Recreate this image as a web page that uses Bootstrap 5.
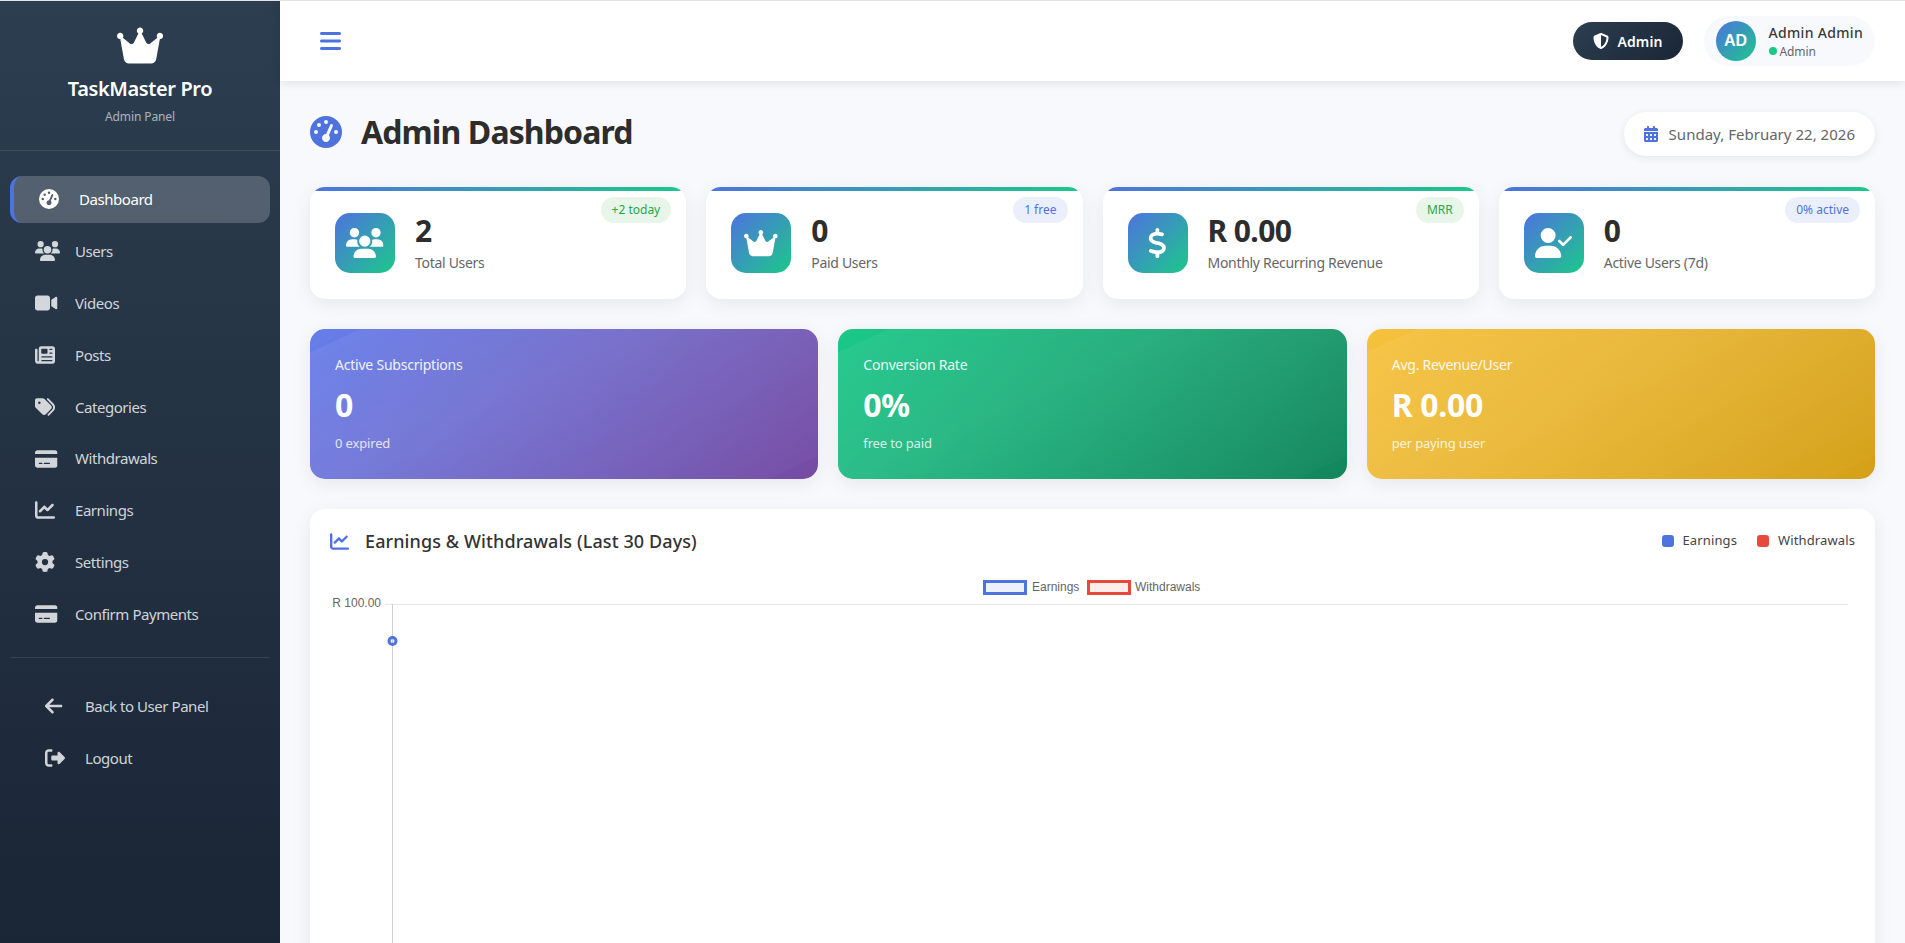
<!doctype html>
<html lang="en">
<head>
<meta charset="utf-8">
<title>Admin Dashboard</title>
<link href="https://cdn.jsdelivr.net/npm/bootstrap@5.3.0/dist/css/bootstrap.min.css" rel="stylesheet">
<style>
html,body{height:100%;overflow:hidden}
body{background:#f8f9fc;border-top:1px solid #e2e2e2;font-family:"Noto Sans",sans-serif;color:#333}
.ico{height:1em;width:auto;fill:currentColor;display:block;flex:none}
.shell{height:942px}
.side{flex:0 0 280px;width:280px;background:linear-gradient(180deg,#2c3e50,#1a2535);color:#fff}
.side-head{height:150px;border-bottom:1px solid rgba(255,255,255,.1);padding-top:24px}
.side-head .ico{font-size:41px;margin:0 auto 9px}
.brand-name{font-size:20px;font-weight:600;line-height:28px;letter-spacing:-.4px}
.brand-sub{font-size:12px;line-height:18px;margin-top:5px;opacity:.6;letter-spacing:-.1px}
.side-nav{padding:25px 10px 0}
.side-link{display:flex;align-items:center;height:46.85px;margin-bottom:5px;padding:0 0 0 25px;border-radius:12px;color:rgba(255,255,255,.8);font-size:15px;letter-spacing:-.45px}
.side-link .slot{width:25px;margin-right:15px;font-size:20px;flex:none}
.side-link.on{background:rgba(255,255,255,.2);color:#fff;border-left:4px solid #4e73df}
.side-rule{margin:14px 10px 25px;height:1px;background:rgba(255,255,255,.1)}
.side-foot{padding:0 10px}
.side-foot .side-link{padding-left:35px}
.main-pane{min-width:0}
.topbar{height:80px;background:#fff;box-shadow:0 2px 10px rgba(0,0,0,.1);padding:0 30px 0 40px;position:relative;z-index:2}
.burger{font-size:24px;color:#4e73df}
.role-btn{height:38px;padding:0 20px;border-radius:19px;background:linear-gradient(135deg,#2c3e50,#1a2636);color:#fff;font-size:14px;font-weight:600;gap:8px;letter-spacing:.1px}
.role-btn .ico{font-size:16px}
.user-pill{margin-left:21px;height:50px;padding:0 12px;border-radius:25px;background:#f8f9fc;gap:13px}
.avatar{width:40px;height:40px;border-radius:50%;background:linear-gradient(135deg,#4e73df,#1cc88a);color:#fff;font:700 16px "Liberation Sans",sans-serif}
.user-name{font-size:14px;font-weight:500;line-height:20px;letter-spacing:.32px;color:#3a3a3a}
.user-sub{font-size:12px;line-height:17px;color:#666;letter-spacing:-.1px}
.dot{width:8px;height:8px;border-radius:50%;background:#1cc88a;margin-right:3px}
.content{padding:30px}
.title-row{height:46px;margin-bottom:30px}
.page-title{font-size:32px;font-weight:700;line-height:38px;margin:0 0 4px;letter-spacing:-.9px;color:#2d2d2d}
.page-title .ico{font-size:32px;color:#4e73df;margin-right:19px}
.date-pill{height:44px;padding:0 20px;border-radius:22px;background:#fff;box-shadow:0 2px 10px rgba(0,0,0,.08);font-size:15px;color:#666;gap:11px;letter-spacing:.02px}
.date-pill .ico{font-size:16px;color:#4e73df}
.tight-row{--bs-gutter-x:20px;--bs-gutter-y:0;margin-bottom:30px}
.stat-box{height:112px;border:0;border-radius:15px;box-shadow:0 5px 20px rgba(0,0,0,.07);overflow:hidden;flex-direction:row;align-items:center;padding:0 25px;gap:20px}
.stat-box::before{content:"";position:absolute;left:0;right:0;top:0;height:4px;background:linear-gradient(90deg,#4e73df,#1cc88a)}
.stat-ico{width:60px;height:60px;border-radius:15px;background:linear-gradient(135deg,#4e73df,#1cc88a);color:#fff;font-size:30px;flex:none}
.stat-num{font-size:30px;font-weight:700;line-height:36px;letter-spacing:-.6px;color:#2d2d2d}
.stat-cap{font-size:14px;line-height:21px;margin-top:3px;color:#666;letter-spacing:-.3px}
.stat-tag{position:absolute;top:10px;right:15px;height:26px;line-height:26px;padding:0 11px;border-radius:13px;font-size:12px;letter-spacing:0}
.tag-g{background:#e8f5e9;color:#28a745}
.tag-b{background:#eaeffb;color:#4e73df}
.grad-box{height:150px;border:0;border-radius:15px;box-shadow:0 5px 20px rgba(0,0,0,.07);padding:25px;color:#fff}
.g-purple{background:linear-gradient(155deg,transparent 6%,rgba(255,255,255,.05) 6.1%,rgba(255,255,255,.08) 40%,rgba(255,255,255,.02) 94%,transparent 94.1%),linear-gradient(135deg,#667eea,#764ba2)}
.g-green{background:linear-gradient(155deg,transparent 6%,rgba(255,255,255,.05) 6.1%,rgba(255,255,255,.08) 40%,rgba(255,255,255,.02) 94%,transparent 94.1%),linear-gradient(135deg,#1cc88a,#13855c)}
.g-gold{background:linear-gradient(155deg,transparent 6%,rgba(255,255,255,.05) 6.1%,rgba(255,255,255,.08) 40%,rgba(255,255,255,.02) 94%,transparent 94.1%),linear-gradient(135deg,#f6c23e,#d4a017)}
.grad-cap{font-size:14px;line-height:21px;opacity:.9;letter-spacing:-.22px}
.grad-num{font-size:32px;font-weight:700;line-height:38px;margin-top:11px;letter-spacing:-.3px}
.grad-sub{font-size:13px;line-height:20px;margin-top:9px;opacity:.8;letter-spacing:-.15px}
.chart-box{border:0;border-radius:15px;box-shadow:0 5px 20px rgba(0,0,0,.07);padding:20px;height:600px}
.chart-head{height:24px;margin-bottom:22px}
.chart-title{font-size:18px;font-weight:500;margin:0;line-height:24px;letter-spacing:.1px;color:#333}
.chart-title .ico{font-size:19px;color:#4e73df;margin-right:16px}
.key{font-size:13px;color:#444;letter-spacing:.12px;margin-left:20px}
.key i{display:block;width:12px;height:12px;border-radius:3px;margin-right:9px}
.key-e{background:#4e73df}
.key-w{background:#e74a3b}
.chart-svg{display:block;width:1525px;height:420px}
.chart-svg text{font:12px "Liberation Sans",sans-serif;fill:#666}
</style>
</head>
<body>
<svg width="0" height="0" class="position-absolute">
<symbol id="i-crown" viewBox="0 0 576 512"><path d="M309 106c11.400-7 19-19.700 19-34c0-22.100-17.900-40-40-40s-40 17.900-40 40c0 14.400 7.600 27 19 34L209.700 220.600c-9.100 18.200-32.700 23.400-48.600 10.700L72 160c5-6.700 8-15 8-24c0-22.100-17.900-40-40-40S0 113.900 0 136s17.900 40 40 40c.2 0 .5 0 .7 0L86.400 427.400c5.500 30.400 32 52.600 63 52.600H426.600c30.900 0 57.400-22.100 63-52.600L535.300 176c.2 0 .5 0 .7 0c22.100 0 40-17.900 40-40s-17.900-40-40-40s-40 17.900-40 40c0 9 3 17.300 8 24l-89.100 71.300c-15.900 12.700-39.500 7.500-48.600-10.700L309 106z"/></symbol>
<symbol id="i-gauge" viewBox="0 0 512 512"><path d="M0 256a256 256 0 1 1 512 0A256 256 0 1 1 0 256zM288 96a32 32 0 1 0 -64 0 32 32 0 1 0 64 0zM256 416c35.300 0 64-28.700 64-64c0-17.400-6.900-33.100-18.100-44.600L366 161.700c5.300-12.100-.2-26.300-12.300-31.600s-26.300 .2-31.600 12.300L257.900 288c-.6 0-1.300 0-1.900 0c-35.300 0-64 28.700-64 64s28.700 64 64 64zM176 144a32 32 0 1 0 -64 0 32 32 0 1 0 64 0zM96 288a32 32 0 1 0 0-64 32 32 0 1 0 0 64zm352-32a32 32 0 1 0 -64 0 32 32 0 1 0 64 0z"/></symbol>
<symbol id="i-users" viewBox="0 0 640 512"><path d="M144 0a80 80 0 1 1 0 160A80 80 0 1 1 144 0zM512 0a80 80 0 1 1 0 160A80 80 0 1 1 512 0zM0 298.700C0 239.800 47.800 192 106.700 192h42.700c15.900 0 31 3.500 44.600 9.700c-1.300 7.200-1.900 14.700-1.900 22.300c0 38.200 16.800 72.500 43.300 96c-.2 0-.4 0-.7 0H21.300C9.600 320 0 310.400 0 298.700zM405.300 320c-.2 0-.4 0-.7 0c26.600-23.500 43.300-57.800 43.300-96c0-7.600-.7-15-1.900-22.300c13.600-6.300 28.700-9.700 44.600-9.700h42.700C592.200 192 640 239.800 640 298.700c0 11.800-9.600 21.300-21.300 21.300H405.300zM224 224a96 96 0 1 1 192 0 96 96 0 1 1 -192 0zM128 485.300C128 411.700 187.700 352 261.300 352H378.700C452.300 352 512 411.700 512 485.300c0 14.700-11.900 26.700-26.700 26.700H154.700c-14.700 0-26.700-11.900-26.700-26.700z"/></symbol>
<symbol id="i-video" viewBox="0 0 576 512"><path d="M0 128C0 92.700 28.700 64 64 64H320c35.300 0 64 28.700 64 64V384c0 35.300-28.700 64-64 64H64c-35.300 0-64-28.700-64-64V128zM559.100 99.800c10.400 5.600 16.900 16.400 16.900 28.200V384c0 11.800-6.500 22.600-16.900 28.200s-23 5-32.900-1.600l-96-64L416 337.100V320 192 174.900l14.200-9.500 96-64c9.800-6.500 22.400-7.200 32.900-1.600z"/></symbol>
<symbol id="i-news" viewBox="0 0 512 512"><path d="M96 96c0-35.300 28.700-64 64-64H448c35.300 0 64 28.700 64 64V416c0 35.300-28.700 64-64 64H80c-44.200 0-80-35.800-80-80V128c0-17.700 14.300-32 32-32s32 14.300 32 32V400c0 8.800 7.200 16 16 16s16-7.200 16-16V96zm64 24v80c0 13.300 10.700 24 24 24H296c13.300 0 24-10.700 24-24V120c0-13.300-10.700-24-24-24H184c-13.300 0-24 10.700-24 24zm208-8c0 8.800 7.200 16 16 16h48c8.800 0 16-7.200 16-16s-7.200-16-16-16H384c-8.800 0-16 7.200-16 16zm0 96c0 8.800 7.200 16 16 16h48c8.800 0 16-7.200 16-16s-7.200-16-16-16H384c-8.800 0-16 7.200-16 16zM160 304c0 8.800 7.200 16 16 16H432c8.800 0 16-7.200 16-16s-7.200-16-16-16H176c-8.800 0-16 7.200-16 16zm0 96c0 8.800 7.200 16 16 16H432c8.800 0 16-7.200 16-16s-7.200-16-16-16H176c-8.800 0-16 7.200-16 16z"/></symbol>
<symbol id="i-tags" viewBox="0 0 512 512"><path d="M345 39.100L472.800 168.400c52.400 53 52.400 138.200 0 191.200L360.800 472.900c-9.300 9.400-24.500 9.500-33.900 .2s-9.500-24.500-.2-33.900L438.600 325.900c33.900-34.300 33.900-89.400 0-123.700L310.900 72.900c-9.300-9.400-9.200-24.600 .2-33.900s24.600-9.200 33.900 .2zM0 229.500V80C0 53.500 21.500 32 48 32H197.500c17 0 33.300 6.700 45.300 18.700l168 168c25 25 25 65.500 0 90.500L277.300 442.700c-25 25-65.500 25-90.500 0l-168-168C6.700 262.700 0 246.500 0 229.500zM144 144a32 32 0 1 0 -64 0 32 32 0 1 0 64 0z"/></symbol>
<symbol id="i-card" viewBox="0 0 576 512"><path d="M64 32C28.700 32 0 60.700 0 96v32H576V96c0-35.300-28.700-64-64-64H64zM576 224H0V416c0 35.300 28.700 64 64 64H512c35.300 0 64-28.700 64-64V224zM112 352h64c8.800 0 16 7.200 16 16s-7.200 16-16 16H112c-8.800 0-16-7.200-16-16s7.200-16 16-16zm112 16c0-8.800 7.200-16 16-16H368c8.800 0 16 7.200 16 16s-7.200 16-16 16H240c-8.800 0-16-7.200-16-16z"/></symbol>
<symbol id="i-chart" viewBox="0 0 512 512"><path d="M64 64c0-17.700-14.300-32-32-32S0 46.300 0 64V400c0 44.200 35.800 80 80 80H480c17.700 0 32-14.300 32-32s-14.300-32-32-32H80c-8.800 0-16-7.200-16-16V64zm406.600 86.600c12.500-12.500 12.500-32.800 0-45.300s-32.800-12.500-45.300 0L320 210.700l-57.400-57.400c-12.500-12.500-32.800-12.500-45.300 0l-112 112c-12.500 12.500-12.500 32.800 0 45.300s32.800 12.500 45.300 0L240 221.300l57.400 57.400c12.500 12.500 32.800 12.500 45.300 0l128-128z"/></symbol>
<symbol id="i-gear" viewBox="0 0 512 512"><path d="M495.900 166.600c3.200 8.700 .5 18.400-6.400 24.600l-43.300 39.400c1.100 8.300 1.700 16.800 1.700 25.400s-.6 17.100-1.700 25.400l43.300 39.400c6.900 6.200 9.600 15.900 6.400 24.600c-4.400 11.900-9.700 23.300-15.800 34.300l-4.700 8.100c-6.600 11-14 21.400-22.100 31.200c-5.900 7.200-15.700 9.600-24.500 6.800l-55.700-17.700c-13.400 10.300-28.200 18.900-44 25.400l-12.500 57.100c-2 9.100-9 16.300-18.200 17.800c-13.800 2.300-28 3.500-42.500 3.500s-28.700-1.200-42.500-3.500c-9.200-1.500-16.200-8.700-18.200-17.800l-12.500-57.100c-15.800-6.500-30.600-15.100-44-25.400L83.100 425.900c-8.800 2.800-18.600 .3-24.500-6.800c-8.100-9.800-15.500-20.200-22.100-31.200l-4.700-8.100c-6.100-11-11.400-22.400-15.800-34.300c-3.200-8.700-.5-18.400 6.400-24.600l43.300-39.400C64.600 273.100 64 264.600 64 256s.6-17.100 1.700-25.400L22.400 191.200c-6.900-6.200-9.600-15.900-6.400-24.600c4.400-11.900 9.700-23.300 15.800-34.300l4.700-8.100c6.600-11 14-21.400 22.100-31.200c5.900-7.200 15.700-9.600 24.500-6.800l55.700 17.700c13.400-10.300 28.200-18.900 44-25.400l12.500-57.100c2-9.100 9-16.300 18.200-17.800C227.300 1.200 241.500 0 256 0s28.700 1.200 42.500 3.500c9.200 1.500 16.200 8.700 18.200 17.800l12.500 57.100c15.800 6.500 30.600 15.100 44 25.400l55.700-17.700c8.800-2.800 18.600-.3 24.500 6.800c8.100 9.800 15.500 20.200 22.100 31.200l4.700 8.100c6.100 11 11.400 22.400 15.800 34.300zM256 336a80 80 0 1 0 0-160 80 80 0 1 0 0 160z"/></symbol>
<symbol id="i-back" viewBox="0 0 448 512"><path d="M9.400 233.400c-12.500 12.500-12.500 32.800 0 45.300l160 160c12.500 12.500 32.800 12.500 45.300 0s12.500-32.800 0-45.300L109.200 288 416 288c17.700 0 32-14.300 32-32s-14.300-32-32-32l-306.700 0L214.600 118.600c12.500-12.500 12.500-32.800 0-45.300s-32.800-12.500-45.300 0l-160 160z"/></symbol>
<symbol id="i-out" viewBox="0 0 512 512"><path d="M377.900 105.900L500.700 228.700c7.200 7.200 11.300 17.100 11.300 27.300s-4.100 20.100-11.300 27.300L377.900 406.100c-6.400 6.400-15 9.900-24 9.900c-18.700 0-33.900-15.200-33.900-33.900l0-62.100-128 0c-17.700 0-32-14.300-32-32l0-64c0-17.700 14.300-32 32-32l128 0 0-62.100c0-18.700 15.200-33.900 33.900-33.900c9 0 17.600 3.600 24 9.900zM160 96L96 96c-17.700 0-32 14.300-32 32l0 256c0 17.700 14.300 32 32 32l64 0c17.700 0 32 14.300 32 32s-14.300 32-32 32l-64 0c-53 0-96-43-96-96L0 128C0 75 43 32 96 32l64 0c17.700 0 32 14.300 32 32s-14.300 32-32 32z"/></symbol>
<symbol id="i-cal" viewBox="0 0 448 512"><path d="M128 0c17.700 0 32 14.300 32 32V64H288V32c0-17.700 14.300-32 32-32s32 14.300 32 32V64h48c26.500 0 48 21.500 48 48v48H0V112C0 85.500 21.500 64 48 64H96V32c0-17.700 14.300-32 32-32zM0 192H448V464c0 26.500-21.500 48-48 48H48c-26.500 0-48-21.500-48-48V192zm64 80v32c0 8.800 7.200 16 16 16h32c8.800 0 16-7.200 16-16V272c0-8.800-7.200-16-16-16H80c-8.800 0-16 7.200-16 16zm128 0v32c0 8.800 7.200 16 16 16h32c8.800 0 16-7.200 16-16V272c0-8.800-7.200-16-16-16H208c-8.800 0-16 7.200-16 16zm144-16c-8.800 0-16 7.200-16 16v32c0 8.800 7.200 16 16 16h32c8.800 0 16-7.200 16-16V272c0-8.800-7.200-16-16-16H336zM64 400v32c0 8.800 7.200 16 16 16h32c8.800 0 16-7.200 16-16V400c0-8.800-7.200-16-16-16H80c-8.800 0-16 7.200-16 16zm144-16c-8.800 0-16 7.200-16 16v32c0 8.800 7.200 16 16 16h32c8.800 0 16-7.200 16-16V400c0-8.800-7.200-16-16-16H208zm112 16v32c0 8.800 7.200 16 16 16h32c8.800 0 16-7.200 16-16V400c0-8.800-7.200-16-16-16H336c-8.800 0-16 7.200-16 16z"/></symbol>
<symbol id="i-shield" viewBox="0 0 512 512"><path d="M256 0c4.600 0 9.200 1 13.400 2.900L457.700 82.800c22 9.300 38.400 31 38.300 57.200c-.5 99.200-41.300 280.700-213.600 363.200c-16.700 8-36.100 8-52.800 0C57.300 420.700 16.500 239.200 16 140c-.1-26.200 16.300-47.900 38.300-57.200L242.700 2.900C246.800 1 251.400 0 256 0zm0 66.800V444.800C394 378 431.100 230.100 432 141.400L256 66.800l0 0z"/></symbol>
<symbol id="i-dollar" viewBox="0 0 320 512"><path d="M160 0c17.700 0 32 14.300 32 32V67.700c1.600 .2 3.100 .4 4.700 .7c.4 .1 .7 .1 1.100 .2l48 8.800c17.400 3.200 28.900 19.900 25.700 37.200s-19.900 28.900-37.200 25.700l-47.500-8.700c-31.300-4.600-58.900-1.500-78.300 6.200s-27.200 18.300-29 28.100c-2 10.700-.5 16.700 1.200 20.400c1.800 3.900 5.500 8.300 12.800 13.200c16.300 10.700 41.300 17.700 73.700 26.300l2.900 .8c28.600 7.600 63.600 16.800 89.600 33.800c14.200 9.300 27.600 21.900 35.900 39.500c8.500 17.900 10.300 37.900 6.400 59.200c-6.900 38-33.100 63.400-65.600 76.700c-13.700 5.600-28.600 9.200-44.400 11V480c0 17.700-14.300 32-32 32s-32-14.300-32-32V445.100c-.4-.1-.9-.1-1.300-.2l-.2 0 0 0c-24.400-3.800-64.500-14.300-91.500-26.300c-16.100-7.200-23.400-26.100-16.200-42.200s26.100-23.400 42.200-16.200c20.900 9.300 55.300 18.500 75.200 21.600c31.900 4.700 58.200 2 76-5.300c16.900-6.900 24.600-16.900 26.800-28.900c1.900-10.600 .4-16.700-1.300-20.400c-1.900-4-5.600-8.400-13-13.300c-16.400-10.700-41.500-17.700-74-26.300l-2.800-.7 0 0C119.400 279.300 84.400 270 58.400 253c-14.200-9.300-27.500-22-35.800-39.600c-8.400-17.900-10.100-37.900-6.100-59.200C23.700 116 52.300 91.200 87.700 77.300c12.600-5 26.100-8.600 40.300-11V32c0-17.700 14.300-32 32-32z"/></symbol>
<symbol id="i-ucheck" viewBox="0 0 640 512"><path d="M96 128a128 128 0 1 1 256 0A128 128 0 1 1 96 128zM0 482.300C0 383.800 79.800 304 178.300 304h91.400C368.200 304 448 383.800 448 482.300c0 16.400-13.300 29.700-29.700 29.700H29.700C13.300 512 0 498.700 0 482.300zM625 177L497 305c-9.400 9.400-24.600 9.400-33.900 0l-64-64c-9.400-9.400-9.400-24.600 0-33.900s24.600-9.400 33.900 0l47 47L591 143c9.400-9.400 24.600-9.400 33.900 0s9.400 24.600 0 33.900z"/></symbol>
<symbol id="i-bars" viewBox="0 0 448 512"><path d="M0 96C0 78.300 14.300 64 32 64H416c17.700 0 32 14.300 32 32s-14.300 32-32 32H32C14.300 128 0 113.700 0 96zM0 256c0-17.700 14.300-32 32-32H416c17.700 0 32 14.300 32 32s-14.300 32-32 32H32c-17.700 0-32-14.300-32-32zM448 416c0 17.700-14.300 32-32 32H32c-17.700 0-32-14.300-32-32s14.300-32 32-32H416c17.700 0 32 14.300 32 32z"/></symbol>
</svg>

<div class="d-flex shell">
  <aside class="side d-flex flex-column">
    <div class="side-head text-center">
      <svg class="ico" viewBox="0 0 576 512"><use href="#i-crown"/></svg>
      <div class="brand-name">TaskMaster Pro</div>
      <div class="brand-sub">Admin Panel</div>
    </div>
    <nav class="nav flex-column side-nav">
      <a class="nav-link side-link on" href="#"><span class="slot"><svg class="ico" viewBox="0 0 512 512"><use href="#i-gauge"/></svg></span>Dashboard</a>
      <a class="nav-link side-link" href="#"><span class="slot"><svg class="ico" viewBox="0 0 640 512"><use href="#i-users"/></svg></span>Users</a>
      <a class="nav-link side-link" href="#"><span class="slot"><svg class="ico" viewBox="0 0 576 512"><use href="#i-video"/></svg></span>Videos</a>
      <a class="nav-link side-link" href="#"><span class="slot"><svg class="ico" viewBox="0 0 512 512"><use href="#i-news"/></svg></span>Posts</a>
      <a class="nav-link side-link" href="#"><span class="slot"><svg class="ico" viewBox="0 0 512 512"><use href="#i-tags"/></svg></span>Categories</a>
      <a class="nav-link side-link" href="#"><span class="slot"><svg class="ico" viewBox="0 0 576 512"><use href="#i-card"/></svg></span>Withdrawals</a>
      <a class="nav-link side-link" href="#"><span class="slot"><svg class="ico" viewBox="0 0 512 512"><use href="#i-chart"/></svg></span>Earnings</a>
      <a class="nav-link side-link" href="#"><span class="slot"><svg class="ico" viewBox="0 0 512 512"><use href="#i-gear"/></svg></span>Settings</a>
      <a class="nav-link side-link" href="#"><span class="slot"><svg class="ico" viewBox="0 0 576 512"><use href="#i-card"/></svg></span>Confirm Payments</a>
    </nav>
    <div class="side-rule"></div>
    <nav class="nav flex-column side-foot">
      <a class="nav-link side-link" href="#"><span class="slot"><svg class="ico" viewBox="0 0 448 512"><use href="#i-back"/></svg></span>Back to User Panel</a>
      <a class="nav-link side-link" href="#"><span class="slot"><svg class="ico" viewBox="0 0 512 512"><use href="#i-out"/></svg></span>Logout</a>
    </nav>
  </aside>

  <div class="main-pane flex-grow-1 d-flex flex-column">
    <header class="topbar d-flex align-items-center justify-content-between flex-shrink-0">
      <svg class="ico burger" viewBox="0 0 448 512"><use href="#i-bars"/></svg>
      <div class="d-flex align-items-center">
        <div class="role-btn d-flex align-items-center"><svg class="ico" viewBox="0 0 512 512"><use href="#i-shield"/></svg>Admin</div>
        <div class="user-pill d-flex align-items-center">
          <div class="avatar d-flex align-items-center justify-content-center">AD</div>
          <div>
            <div class="user-name">Admin Admin</div>
            <div class="user-sub d-flex align-items-center"><span class="dot"></span>Admin</div>
          </div>
        </div>
      </div>
    </header>

    <main class="content flex-shrink-0">
      <div class="title-row d-flex align-items-center justify-content-between">
        <h1 class="page-title d-flex align-items-center"><svg class="ico" viewBox="0 0 512 512"><use href="#i-gauge"/></svg>Admin Dashboard</h1>
        <div class="date-pill d-flex align-items-center"><svg class="ico" viewBox="0 0 448 512"><use href="#i-cal"/></svg>Sunday, February 22, 2026</div>
      </div>

      <div class="row tight-row">
        <div class="col-3"><div class="card stat-box position-relative">
          <div class="stat-ico d-flex align-items-center justify-content-center"><svg class="ico" viewBox="0 0 640 512"><use href="#i-users"/></svg></div>
          <div><div class="stat-num">2</div><div class="stat-cap">Total Users</div></div>
          <span class="stat-tag tag-g">+2 today</span>
        </div></div>
        <div class="col-3"><div class="card stat-box position-relative">
          <div class="stat-ico d-flex align-items-center justify-content-center"><svg class="ico" viewBox="0 0 576 512"><use href="#i-crown"/></svg></div>
          <div><div class="stat-num">0</div><div class="stat-cap">Paid Users</div></div>
          <span class="stat-tag tag-b">1 free</span>
        </div></div>
        <div class="col-3"><div class="card stat-box position-relative">
          <div class="stat-ico d-flex align-items-center justify-content-center"><svg class="ico" viewBox="0 0 320 512"><use href="#i-dollar"/></svg></div>
          <div><div class="stat-num">R 0.00</div><div class="stat-cap">Monthly Recurring Revenue</div></div>
          <span class="stat-tag tag-g">MRR</span>
        </div></div>
        <div class="col-3"><div class="card stat-box position-relative">
          <div class="stat-ico d-flex align-items-center justify-content-center"><svg class="ico" viewBox="0 0 640 512"><use href="#i-ucheck"/></svg></div>
          <div><div class="stat-num">0</div><div class="stat-cap">Active Users (7d)</div></div>
          <span class="stat-tag tag-b">0% active</span>
        </div></div>
      </div>

      <div class="row tight-row">
        <div class="col-4"><div class="card grad-box g-purple">
          <div class="grad-cap">Active Subscriptions</div><div class="grad-num">0</div><div class="grad-sub">0 expired</div>
        </div></div>
        <div class="col-4"><div class="card grad-box g-green">
          <div class="grad-cap">Conversion Rate</div><div class="grad-num">0%</div><div class="grad-sub">free to paid</div>
        </div></div>
        <div class="col-4"><div class="card grad-box g-gold">
          <div class="grad-cap">Avg. Revenue/User</div><div class="grad-num">R 0.00</div><div class="grad-sub">per paying user</div>
        </div></div>
      </div>

      <div class="card chart-box">
        <div class="chart-head d-flex align-items-center justify-content-between">
          <h2 class="chart-title d-flex align-items-center"><svg class="ico" viewBox="0 0 512 512"><use href="#i-chart"/></svg>Earnings &amp; Withdrawals (Last 30 Days)</h2>
          <div class="d-flex align-items-center">
            <div class="key d-flex align-items-center"><i class="key-e"></i>Earnings</div>
            <div class="key d-flex align-items-center"><i class="key-w"></i>Withdrawals</div>
          </div>
        </div>
        <svg class="chart-svg" viewBox="0 0 1525 420">
          <rect x="654.500" y="6.500" width="41" height="12" fill="rgba(78,115,223,.1)" stroke="#4e73df" stroke-width="3"/>
          <text x="702" y="16">Earnings</text>
          <rect x="758.500" y="6.500" width="41" height="12" fill="rgba(231,74,59,.1)" stroke="#e74a3b" stroke-width="3"/>
          <text x="805" y="16">Withdrawals</text>
          <text x="51" y="32" text-anchor="end">R 100.00</text>
          <line x1="55" y1="29.500" x2="1518" y2="29.500" stroke="#e5e5e5"/>
          <line x1="62.500" y1="29" x2="62.500" y2="420" stroke="#cfcfcf"/>
          <circle cx="62.500" cy="66" r="3.500" fill="rgba(78,115,223,.1)" stroke="#4e73df" stroke-width="3"/>
        </svg>
      </div>
    </main>
  </div>
</div>
<script src="https://cdn.jsdelivr.net/npm/bootstrap@5.3.0/dist/js/bootstrap.bundle.min.js"></script>
</body>
</html>
